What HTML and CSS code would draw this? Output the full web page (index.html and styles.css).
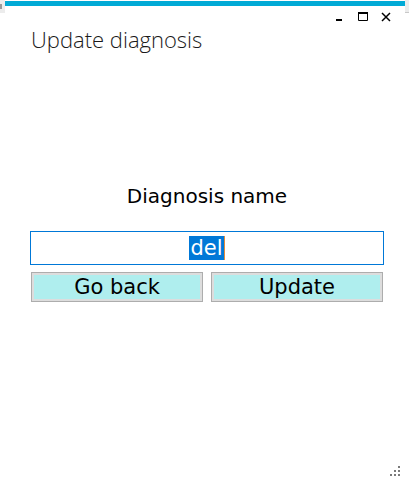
FILE: index.html
```html
<!DOCTYPE html>
<html lang="en">
<head>
<meta charset="utf-8">
<title>Update diagnosis</title>
<link rel="stylesheet" href="styles.css">
</head>
<body>
<div class="window">
  <div class="topbar">
    <div class="corner corner-left"><span class="notch"></span></div>
    <div class="accent"></div>
    <div class="corner corner-right"></div>
  </div>
  <div class="caption">
    <svg class="cap-btn" width="10" height="10" viewBox="0 0 10 10"><rect x="1" y="7" width="6" height="2" fill="#000"/></svg>
    <svg class="cap-btn" width="10" height="10" viewBox="0 0 10 10"><path d="M0.5 1.5 H9.5 V8.5 H0.5 Z" fill="none" stroke="#000" stroke-width="1"/><rect x="0" y="0" width="10" height="2" fill="#000"/></svg>
    <svg class="cap-btn" width="10" height="10" viewBox="0 0 10 10"><path d="M1 1 L9 9 M9 1 L1 9" stroke="#000" stroke-width="1.5"/></svg>
  </div>
  <h1 class="title">Update diagnosis</h1>
  <div class="content">
    <div class="label">Diagnosis name</div>
    <div class="input"><span class="sel">del</span><span class="caret"></span></div>
    <div class="buttons">
      <button class="btn">Go back</button>
      <button class="btn">Update</button>
    </div>
  </div>
  <div class="grip">
    <svg width="10" height="10" viewBox="0 0 10 10" fill="#7a7a7a">
      <rect x="8" y="0" width="2" height="2"/>
      <rect x="4" y="4" width="2" height="2"/><rect x="8" y="4" width="2" height="2"/>
      <rect x="0" y="8" width="2" height="2"/><rect x="4" y="8" width="2" height="2"/><rect x="8" y="8" width="2" height="2"/>
    </svg>
  </div>
</div>
</body>
</html>
```
FILE: styles.css
```css
html, body {
  margin: 0;
  padding: 0;
  background: #fff;
}
.window {
  width: 409px;
  height: 494px;
  display: flex;
  flex-direction: column;
  position: relative;
  overflow: hidden;
}
.topbar {
  display: flex;
  height: 13px;
}
.corner {
  width: 5px;
  height: 13px;
  background: #ececec;
  position: relative;
}
.notch {
  position: absolute;
  left: 0;
  top: 4px;
  width: 2px;
  height: 5px;
  background: #9a9a9a;
}
.corner-right {
  width: 4px;
  border-bottom: 1px solid #c8c8c8;
  height: 12px;
}
.accent {
  flex: 1;
  height: 5px;
  margin-top: 1px;
  background: #01aad6;
}
.caption {
  display: flex;
  justify-content: flex-end;
  gap: 13px;
  padding-right: 18px;
  margin-top: -1px;
  height: 10px;
}
.cap-btn {
  display: block;
}
.title {
  margin: 2px 0 0 31px;
  font-family: "Open Sans", "Noto Sans", sans-serif;
  font-weight: 300;
  font-size: 22px;
  line-height: 30px;
  color: #1a1a1a;
}
.content {
  width: 354px;
  margin: 0 0 0 30px;
  display: flex;
  flex-direction: column;
  align-items: stretch;
}
.label {
  margin-top: 129px;
  text-align: center;
  font-family: "DejaVu Sans", sans-serif;
  font-size: 20px;
  line-height: 26px;
  color: #000;
}
.input {
  margin-top: 22px;
  height: 32px;
  border: 1px solid #0078d7;
  display: flex;
  justify-content: center;
  align-items: center;
  font-family: "DejaVu Sans", sans-serif;
  font-size: 21px;
}
.sel {
  background: #0078d7;
  color: #fff;
  line-height: 24px;
  padding: 0 1px;
}
.caret {
  width: 1px;
  height: 24px;
  background: #e08a3c;
}
.buttons {
  display: flex;
  gap: 8px;
  margin-top: 7px;
  padding: 0 1px;
}
.btn {
  flex: 1;
  height: 30px;
  margin: 0;
  padding: 0;
  border: 1px solid #adadad;
  box-shadow: inset 0 0 0 2px #dddddd;
  background: #afeeee;
  font-family: "DejaVu Sans", sans-serif;
  font-size: 21px;
  line-height: 28px;
  color: #000;
}
.grip {
  position: absolute;
  right: 9px;
  bottom: 18px;
  line-height: 0;
}
```
